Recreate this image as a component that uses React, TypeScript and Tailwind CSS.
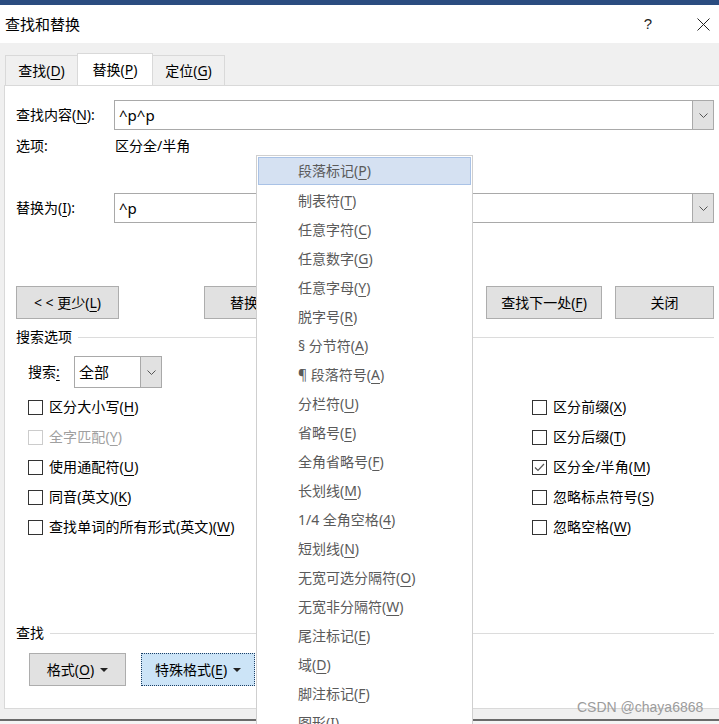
import React from "react";

const font = "font-['Noto_Sans','Noto_Sans_CJK_SC',sans-serif]";

const U = ({ c }: { c: string }) => (
  <span className="underline underline-offset-[3px] decoration-[1px]">{c}</span>
);

const Chevron = () => (
  <svg width="9" height="5" viewBox="0 0 9 5" fill="none">
    <path d="M0.5 0.5 L4.5 4.5 L8.5 0.5" stroke="#555" strokeWidth="1" />
  </svg>
);

const Caret = () => (
  <svg width="8" height="4" viewBox="0 0 8 4" className="ml-[6px]">
    <path d="M0 0 L8 0 L4 4 Z" fill="#222" />
  </svg>
);

const Box = ({ checked, disabled }: { checked?: boolean; disabled?: boolean }) => (
  <div
    className={`w-[15px] h-[15px] border bg-white flex items-center justify-center ${
      disabled ? "border-[#cccccc]" : "border-[#333333]"
    }`}
  >
    {checked && (
      <svg width="11" height="9" viewBox="0 0 11 9" fill="none">
        <path d="M1 4.5 L4 7.5 L10 1" stroke="#555" strokeWidth="1.2" />
      </svg>
    )}
  </div>
);

const Check = ({
  label,
  k,
  checked,
  disabled,
}: {
  label: string;
  k: string;
  checked?: boolean;
  disabled?: boolean;
}) => (
  <div className="h-[30px] flex items-center">
    <Box checked={checked} disabled={disabled} />
    <span className={`ml-[6px] text-[14px] leading-[20px] tracking-[0.1px] ${disabled ? "text-[#a0a0a0]" : "text-black"}`}>
      {label}(<U c={k} />)
    </span>
  </div>
);

const Btn = ({ w, ml, children }: { w: string; ml?: string; children?: React.ReactNode }) => (
  <div
    className={`${w} ${ml ?? ""} h-[33px] bg-[#e1e1e1] border border-[#adadad] flex items-center justify-center text-[14px] leading-[20px] text-black`}
  >
    {children}
  </div>
);

const Combo = ({ text }: { text: string }) => (
  <div className="flex-1 h-[30px] border border-[#a9a9a9] bg-white flex">
    <div className="flex-1 pl-[4px] text-[15px] leading-[28px] text-black">{text}</div>
    <div className="w-[21px] h-full bg-[#e1e1e1] border-l border-[#a9a9a9] flex items-center justify-center">
      <Chevron />
    </div>
  </div>
);

const menu: [string, string][] = [
  ["段落标记", "P"],
  ["制表符", "T"],
  ["任意字符", "C"],
  ["任意数字", "G"],
  ["任意字母", "Y"],
  ["脱字号", "R"],
  ["§ 分节符", "A"],
  ["¶ 段落符号", "A"],
  ["分栏符", "U"],
  ["省略号", "E"],
  ["全角省略号", "F"],
  ["长划线", "M"],
  ["1/4 全角空格", "4"],
  ["短划线", "N"],
  ["无宽可选分隔符", "O"],
  ["无宽非分隔符", "W"],
  ["尾注标记", "E"],
  ["域", "D"],
  ["脚注标记", "F"],
  ["图形", "I"],
];

const App = () => {
  return (
    <div className={`relative w-[719px] h-[724px] overflow-hidden bg-[#f0f0f0] ${font}`}>
      <div className="h-[5px] bg-[#2b4c80]" />
      <div className="h-[38px] bg-white flex items-center pl-[5px]">
        <span className="text-[15px] leading-[20px] text-black">查找和替换</span>
        <span className="ml-auto text-[15px] text-[#222] font-['Liberation_Sans',sans-serif]">?</span>
        <svg width="13" height="13" viewBox="0 0 13 13" className="ml-[45px] mr-[9px]">
          <path d="M0.5 0.5 L12.5 12.5 M12.5 0.5 L0.5 12.5" stroke="#222" strokeWidth="1" />
        </svg>
      </div>

      {/* tabs */}
      <div className="flex items-end pl-[5px] mt-[10px] h-[32px]">
        <div className="w-[73px] h-[30px] border border-b-0 border-[#d9d9d9] flex items-center justify-center text-[14px] text-black">
          查找(<U c="D" />)
        </div>
        <div className="w-[76px] h-[32px] -ml-px bg-white border border-b-0 border-[#d9d9d9] flex items-center justify-center text-[14px] text-black relative z-10">
          替换(<U c="P" />)
        </div>
        <div className="w-[73px] h-[30px] -ml-px border border-b-0 border-[#d9d9d9] flex items-center justify-center text-[14px] text-black">
          定位(<U c="G" />)
        </div>
      </div>

      {/* panel */}
      <div className="ml-[4px] w-[718px] h-[624px] bg-white border border-[#d9d9d9] pl-[11px] pr-[7px] pt-[14px] flex flex-col text-[14px] leading-[20px] text-black">
        <div className="flex items-center h-[30px]">
          <div className="w-[98px]">
            查找内容(<U c="N" />):
          </div>
          <Combo text="^p^p" />
        </div>
        <div className="flex mt-[6px] h-[20px]">
          <div className="w-[98px]">选项:</div>
          <div className="pl-[1px]">区分全/半角</div>
        </div>
        <div className="flex items-center h-[30px] mt-[37px]">
          <div className="w-[98px]">
            替换为(<U c="I" />):
          </div>
          <Combo text="^p" />
        </div>

        <div className="flex mt-[63px]">
          <Btn w="w-[103px]">
            &lt; &lt; 更少(<U c="L" />)
          </Btn>
          <Btn w="w-[97px]" ml="ml-[85px]">
            替换(<U c="R" />)
          </Btn>
          <Btn w="w-[120px]" ml="ml-[14px]" />
          <Btn w="w-[116px]" ml="ml-auto">
            查找下一处(<U c="F" />)
          </Btn>
          <Btn w="w-[99px]" ml="ml-[13px]">
            关闭
          </Btn>
        </div>

        <div className="flex items-center mt-[8px] h-[20px]">
          <span>搜索选项</span>
          <div className="flex-1 h-px bg-[#dcdcdc] ml-[6px]" />
        </div>

        <div className="flex items-center mt-[9px] h-[32px] pl-[12px]">
          <div className="w-[46px]">
            搜索<span className="underline underline-offset-[3px]">:</span>
          </div>
          <div className="w-[88px] h-[32px] border border-[#a9a9a9] flex">
            <div className="flex-1 pl-[4px] text-[15px] leading-[30px]">全部</div>
            <div className="w-[21px] h-full bg-[#e1e1e1] border-l border-[#a9a9a9] flex items-center justify-center">
              <Chevron />
            </div>
          </div>
        </div>

        <div className="flex mt-[4px] pl-[12px]">
          <div className="w-[504px] flex flex-col">
            <Check label="区分大小写" k="H" />
            <Check label="全字匹配" k="Y" disabled />
            <Check label="使用通配符" k="U" />
            <Check label="同音(英文)" k="K" />
            <Check label="查找单词的所有形式(英文)" k="W" />
          </div>
          <div className="flex flex-col">
            <Check label="区分前缀" k="X" />
            <Check label="区分后缀" k="T" />
            <Check label="区分全/半角" k="M" checked />
            <Check label="忽略标点符号" k="S" />
            <Check label="忽略空格" k="W" />
          </div>
        </div>

        <div className="flex items-center mt-[81px] h-[20px]">
          <span>查找</span>
          <div className="flex-1 h-px bg-[#dcdcdc] ml-[6px]" />
        </div>

        <div className="flex mt-[10px] pl-[13px]">
          <Btn w="w-[97px]">
            格式(<U c="O" />)
            <Caret />
          </Btn>
          <div className="w-[114px] ml-[15px] h-[33px] bg-[#cce4f7] border border-dotted border-[#1b3f66] flex items-center justify-center">
            特殊格式(<U c="E" />)
            <Caret />
          </div>
        </div>
      </div>

      <div className="mt-[10px] h-[2px] bg-[#6a6a6a]" />
      <div className="h-[20px] bg-[#f4f4f4] pl-[505px] text-[15px] leading-[20px] text-black pt-[1px]">
        查目录以用四口格式
      </div>

      {/* special format menu */}
      <div className="absolute left-[256px] top-[155px] w-[217px] h-[600px] bg-white border border-[#cfcfcf] p-px text-[14px] leading-[20px] text-[#5a5a5a]">
        {menu.map(([t, k], i) => (
          <div
            key={i}
            className={`flex items-center ${
              i === 0
                ? "bg-[#d5e1f2] border border-[#a9c2e6] pl-[39px] h-[28px] mb-px"
                : "h-[29px] pl-[40px]"
            }`}
          >
            {t}(<U c={k} />)
          </div>
        ))}
      </div>

      <div className="absolute left-[577px] top-[699px] text-[14px] leading-[17px] text-[#9c9c9c] font-['Liberation_Sans',sans-serif]">
        CSDN @chaya6868
      </div>
    </div>
  );
};

export default App;
